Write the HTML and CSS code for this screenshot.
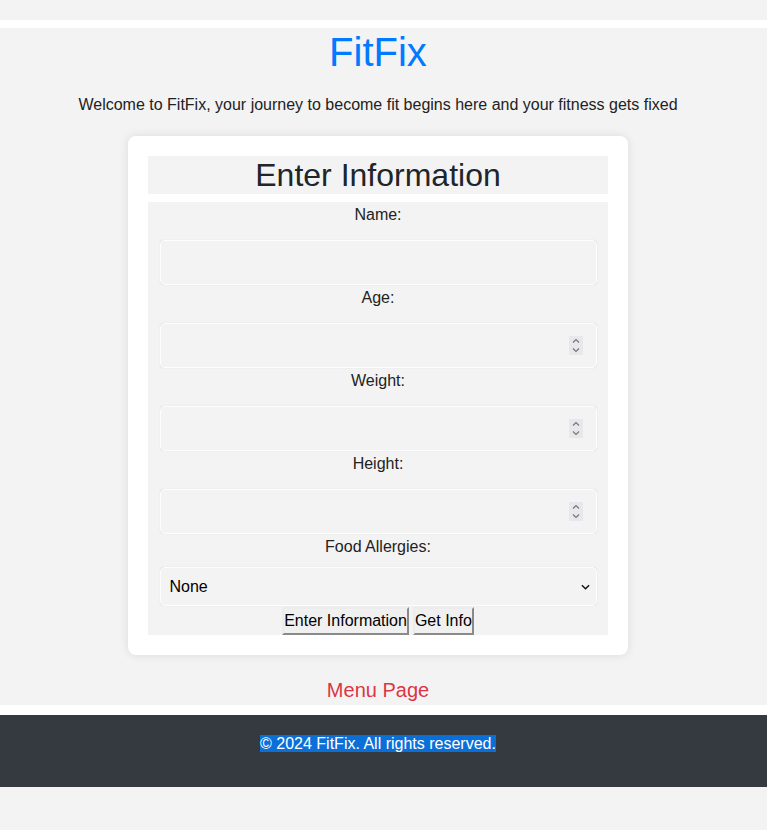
FILE: index.html
```html
<!DOCTYPE html>
<html lang="en">
<head>
<meta charset="utf-8">
<title>FitFix</title>
<link rel="stylesheet" href="styles.css">
</head>
<body>
<div class="top-strip"></div>
<header class="site-header">
  <h1 class="brand">FitFix</h1>
  <p class="welcome">Welcome to FitFix, your journey to become fit begins here and your fitness gets fixed</p>
</header>
<main class="main">
  <section class="card">
    <h2 class="card-title">Enter Information</h2>
    <form class="info-form">
      <label class="field-label" for="name">Name:</label>
      <input class="field" id="name" type="text">
      <label class="field-label" for="age">Age:</label>
      <input class="field" id="age" type="number">
      <label class="field-label" for="weight">Weight:</label>
      <input class="field" id="weight" type="number">
      <label class="field-label" for="height">Height:</label>
      <input class="field" id="height" type="number">
      <label class="field-label select-label" for="allergies">Food Allergies:</label>
      <select class="field select" id="allergies">
        <option>None</option>
      </select>
      <div class="buttons">
        <button type="button" class="btn">Enter Information</button>
        <button type="button" class="btn">Get Info</button>
      </div>
    </form>
  </section>
  <a class="menu-link" href="#">Menu Page</a>
</main>
<div class="bottom-strip"></div>
<footer class="site-footer">
  <p class="copyright"><span class="selected">© 2024 FitFix. All rights reserved.</span></p>
</footer>
</body>
</html>
```
FILE: styles.css
```css
html, body {
  margin: 0;
  padding: 0;
  background: #f3f3f3;
  font-family: "Liberation Sans", Arial, sans-serif;
  color: #222;
}
.top-strip {
  height: 8px;
  margin-top: 20px;
  background: #fff;
}
.site-header {
  padding-right: 11px;
  text-align: center;
}
.brand {
  margin: 0;
  padding-top: 1px;
  font-size: 40px;
  font-weight: normal;
  line-height: 46px;
  color: #007bff;
}
.welcome {
  margin: 21px 0 0;
  font-size: 16px;
  line-height: 18px;
  color: #222;
}
.main {
  display: flex;
  flex-direction: column;
  align-items: center;
  padding-top: 22px;
  padding-right: 11px;
}
.card {
  width: 460px;
  padding: 20px;
  background: #fff;
  border-radius: 8px;
  box-shadow: 0 0 10px rgba(0,0,0,0.1);
}
.card-title {
  margin: 0 0 8px;
  background: #f3f3f3;
  text-align: center;
  font-size: 32px;
  font-weight: normal;
  line-height: 38px;
  color: #212529;
}
.info-form {
  display: flex;
  flex-direction: column;
  align-items: center;
  background: #f3f3f3;
}
.field-label {
  display: block;
  margin-top: 4px;
  font-size: 16px;
  line-height: 18px;
  color: #222;
}
.field {
  box-sizing: border-box;
  width: 437px;
  height: 45px;
  margin-top: 16px;
  padding: 0 12px;
  font-family: "Liberation Sans", Arial, sans-serif;
  font-size: 16px;
  background: #f3f3f3;
  border: 1px solid #fdfdfd;
  border-radius: 4px;
  box-shadow: 0 0 1px rgba(0,0,0,0.18);
}
.field::-webkit-inner-spin-button {
  -webkit-appearance: none;
  appearance: none;
  opacity: 1;
  width: 14px;
  height: 19px;
  margin-right: 1px;
  background-color: #e8e8ec;
  background-image: url("data:image/svg+xml,%3Csvg xmlns='http://www.w3.org/2000/svg' width='14' height='19' viewBox='0 0 14 19'%3E%3Cpath d='M4 6.5l3-3 3 3M4 12.5l3 3 3-3' fill='none' stroke='%23777' stroke-width='1.2'/%3E%3C/svg%3E");
  background-repeat: no-repeat;
  background-position: center;
}
.select {
  -webkit-appearance: none;
  appearance: none;
  height: 39px;
  margin-top: 11px;
  padding: 0 24px 0 9px;
  color: #000;
  background-image: url("data:image/svg+xml,%3Csvg xmlns='http://www.w3.org/2000/svg' width='10' height='6' viewBox='0 0 10 6'%3E%3Cpath d='M1 1l4 4 4-4' fill='none' stroke='%23111' stroke-width='1.6'/%3E%3C/svg%3E");
  background-repeat: no-repeat;
  background-position: right 6px center;
  background-size: 9px 6px;
}
.buttons {
  display: flex;
  gap: 4px;
  margin-top: 1px;
}
.btn {
  height: 28px;
  padding: 0 0;
  font-family: "Liberation Sans", Arial, sans-serif;
  font-size: 16px;
  color: #000;
  background: #f0f0f0;
  border: 2px solid;
  border-color: #ececec #8a8a8a #8a8a8a #ececec;
  border-radius: 0;
}
.menu-link {
  margin-top: 24px;
  margin-bottom: 3px;
  font-size: 20px;
  line-height: 23px;
  color: #dc3545;
  text-decoration: none;
}
.bottom-strip {
  height: 10px;
  background: #fff;
}
.site-footer {
  height: 72px;
  box-sizing: border-box;
  padding-top: 19px;
  background: #343a40;
  text-align: center;
}
.copyright {
  margin: 0;
  padding-right: 11px;
  font-size: 16px;
  line-height: 19px;
  color: #fff;
}
.selected {
  background: #0b6fd8;
}
```
